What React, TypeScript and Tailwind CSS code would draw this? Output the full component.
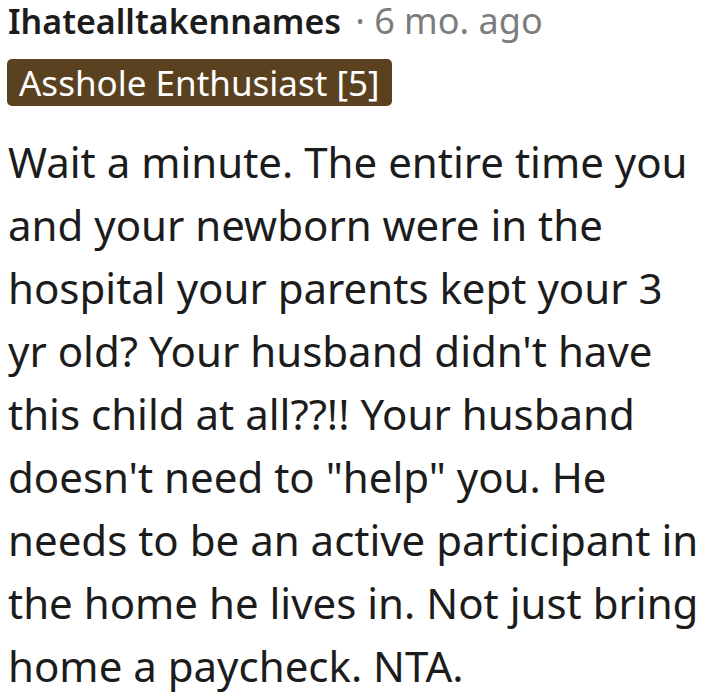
export default function App() {
  const body =
    'Wait a minute. The entire time you and your newborn were in the hospital your parents kept your 3 yr old? Your husband didn\'t have this child at all??!! Your husband doesn\'t need to "help" you. He needs to be an active participant in the home he lives in. Not just bring home a paycheck. NTA.';
  return (
    <div className="w-[702px] h-[699px] bg-white overflow-hidden pl-[8px]" style={{ fontFamily: '"Noto Sans", sans-serif' }}>
      <div className="flex items-baseline pt-[1px] leading-[40px]">
        <span className="font-semibold text-[#1c1c1c] text-[34px]">Ihatealltakennames</span>
        <span className="text-[#7c7c7c] ml-[14px] text-[36px]">· 6 mo. ago</span>
      </div>
      <div className="mt-[18px] flex">
        <span className="bg-[#5a4220] text-white rounded-[5px] text-[35px] leading-[47px] px-[12px] -ml-[1px]">
          Asshole Enthusiast [5]
        </span>
      </div>
      <p className="mt-[24px] text-[42px] leading-[63px] text-[#1c1c1c] w-[694px]">{body}</p>
    </div>
  );
}
